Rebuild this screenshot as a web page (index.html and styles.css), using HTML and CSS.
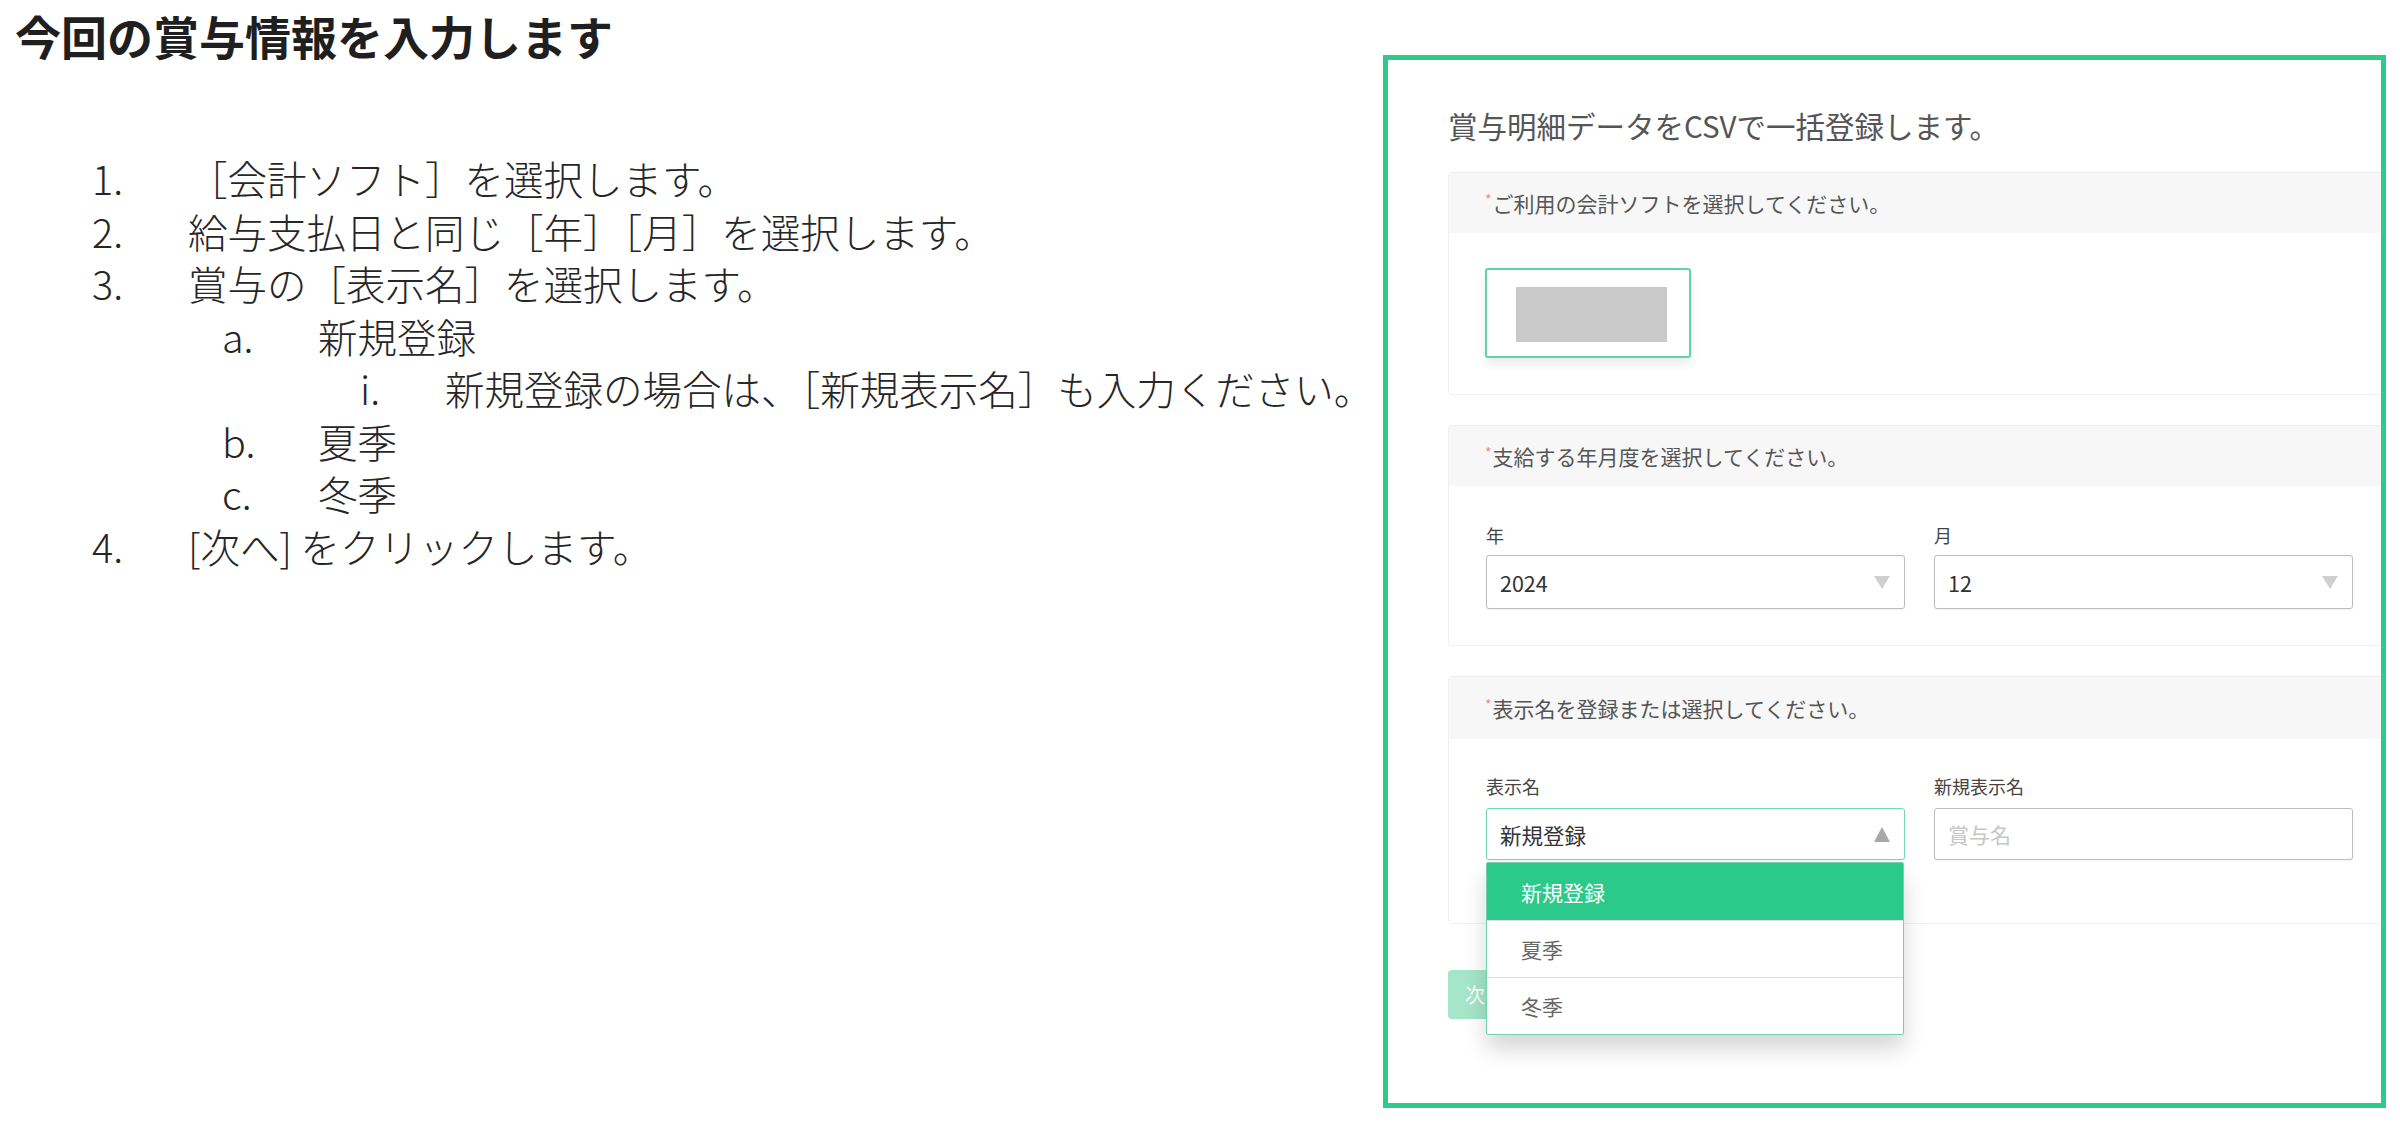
FILE: index.html
```html
<!DOCTYPE html>
<html lang="ja">
<head>
<meta charset="utf-8">
<title>賞与情報の入力</title>
<link rel="stylesheet" href="styles.css">
</head>
<body>
<div class="page">
  <section class="doc">
    <h1 class="title">今回の賞与情報を入力します</h1>
    <ol class="steps">
      <li class="step l1"><span class="n">1.</span><span class="t">［会計ソフト］を選択します。</span></li>
      <li class="step l1"><span class="n">2.</span><span class="t">給与支払日と同じ［年］［月］を選択します。</span></li>
      <li class="step l1"><span class="n">3.</span><span class="t">賞与の［表示名］を選択します。</span></li>
      <li class="step l2"><span class="n">a.</span><span class="t">新規登録</span></li>
      <li class="step l3"><span class="n">i.</span><span class="t">新規登録の場合は、［新規表示名］も入力ください。</span></li>
      <li class="step l2"><span class="n">b.</span><span class="t">夏季</span></li>
      <li class="step l2"><span class="n">c.</span><span class="t">冬季</span></li>
      <li class="step l1"><span class="n">4.</span><span class="t">[次へ] をクリックします。</span></li>
    </ol>
  </section>

  <section class="panel">
    <p class="panel-title">賞与明細データをCSVで一括登録します。</p>

    <div class="card">
      <div class="card-head"><span class="req">*</span>ご利用の会計ソフトを選択してください。</div>
      <div class="card-body soft-body">
        <div class="soft-btn"><span class="soft-logo"></span></div>
      </div>
    </div>

    <div class="card">
      <div class="card-head"><span class="req">*</span>支給する年月度を選択してください。</div>
      <div class="card-body fields ym">
        <div class="field">
          <div class="label">年</div>
          <div class="select tall"><span class="val">2024</span><span class="tri-down"></span></div>
        </div>
        <div class="field">
          <div class="label">月</div>
          <div class="select tall"><span class="val">12</span><span class="tri-down"></span></div>
        </div>
      </div>
    </div>

    <div class="card last">
      <div class="card-head head3"><span class="req">*</span>表示名を登録または選択してください。</div>
      <div class="card-body fields names">
        <div class="field">
          <div class="label">表示名</div>
          <div class="select-wrap">
            <div class="select open"><span class="val">新規登録</span><span class="tri-up"></span></div>
            <ul class="dropdown">
              <li class="opt active">新規登録</li>
              <li class="opt">夏季</li>
              <li class="opt">冬季</li>
            </ul>
          </div>
        </div>
        <div class="field">
          <div class="label">新規表示名</div>
          <div class="input"><span class="placeholder">賞与名</span></div>
        </div>
      </div>
    </div>

    <div class="next">次へ</div>
  </section>
</div>
</body>
</html>
```

FILE: styles.css
```css
* {
  box-sizing: border-box;
}

html, body {
  margin: 0;
  padding: 0;
  background: #ffffff;
}

body {
  font-family: "Noto Sans CJK JP", "Noto Sans", sans-serif;
  color: #262626;
}

.page {
  display: flex;
  width: 2400px;
  height: 1122px;
  overflow: hidden;
}

/* ---------- left document ---------- */
.doc {
  flex: none;
  width: 1383px;
}

.title {
  margin: 0;
  padding: 12px 0 0 15px;
  font-size: 46px;
  line-height: 46px;
  font-weight: 700;
  color: #1f1f1f;
}

.steps {
  list-style: none;
  margin: 94px 0 0;
  padding: 0;
}

.step {
  display: flex;
  font-size: 39.5px;
  line-height: 52.5px;
  font-weight: 300;
  color: #262626;
  white-space: nowrap;
}

.step .n {
  flex: none;
}

.l1 { padding-left: 92px; }
.l1 .n { width: 96px; }

.l2 { padding-left: 222px; }
.l2 .n { width: 96px; }

.l3 { padding-left: 360px; }
.l3 .n { width: 85px; }

/* ---------- right panel ---------- */
.panel {
  flex: none;
  position: relative;
  width: 1003px;
  height: 1053px;
  margin-top: 55px;
  border: 5px solid #2ccb8b;
  padding: 45px 0 0 60px;
  overflow: hidden;
  background: #ffffff;
}

.panel-title {
  margin: 0 0 27px;
  font-size: 29.5px;
  line-height: 40px;
  color: #555555;
  white-space: nowrap;
}

.card {
  border: 1px solid #f0f0f0;
  border-right: none;
  border-radius: 4px 0 0 4px;
  margin-bottom: 30px;
  background: #ffffff;
}

.card.last {
  margin-bottom: 0;
}

.card-head {
  height: 60px;
  display: flex;
  align-items: center;
  padding-left: 36px;
  background: #f7f7f7;
  font-size: 21px;
  color: #555555;
  white-space: nowrap;
}

.head3 {
  height: 62px;
}

.req {
  color: #ee8a8a;
  font-size: 14px;
  align-self: center;
  margin-top: -8px;
  margin-right: 1px;
}

.card-body {
  background: #ffffff;
}

.soft-body {
  height: 161px;
  padding: 35px 0 0 36px;
}

.soft-btn {
  width: 206px;
  height: 90px;
  border: 2px solid #5fd3a8;
  border-radius: 3px;
  background: #ffffff;
  display: flex;
  align-items: center;
  justify-content: center;
  box-shadow: 0 6px 10px rgba(0, 0, 0, 0.08);
}

.soft-logo {
  display: block;
  width: 151px;
  height: 55px;
  margin: 2px 0 0 6px;
  background: #c9c9c9;
}

.fields {
  display: grid;
  grid-template-columns: 419px 419px;
  column-gap: 29px;
  padding-left: 37px;
}

.ym {
  padding-top: 36px;
  padding-bottom: 36px;
}

.names {
  padding-top: 34px;
  padding-bottom: 63px;
}

.label {
  font-size: 18px;
  line-height: 26px;
  color: #444444;
  margin-bottom: 7px;
}

.names .label {
  margin-bottom: 9px;
}

.select,
.input {
  display: flex;
  align-items: center;
  justify-content: space-between;
  height: 52px;
  padding: 0 13px 0 13px;
  border: 1px solid #bdbdbd;
  border-radius: 3px;
  background: #ffffff;
  box-shadow: 0 1px 2px rgba(0, 0, 0, 0.06);
}

.select.tall {
  height: 54px;
}

.val {
  font-size: 21.5px;
  color: #333333;
}

.placeholder {
  font-size: 21px;
  color: #c6c6c6;
}

.tri-down {
  width: 0;
  height: 0;
  border-left: 8px solid transparent;
  border-right: 8px solid transparent;
  border-top: 13px solid #cfcfcf;
  margin-right: 1px;
}

.tri-up {
  width: 0;
  height: 0;
  border-left: 8.5px solid transparent;
  border-right: 8.5px solid transparent;
  border-bottom: 15px solid #a8a8a8;
  margin-right: 1px;
}

.select-wrap {
  position: relative;
}

.select.open {
  border-color: #72d8b3;
}

.dropdown {
  position: absolute;
  top: calc(100% + 2px);
  left: 0;
  width: 418px;
  margin: 0;
  padding: 0;
  list-style: none;
  border: 1px solid #6fd4ad;
  border-radius: 2px;
  background: #ffffff;
  box-shadow: 0 14px 22px rgba(0, 0, 0, 0.16);
  z-index: 5;
}

.opt {
  height: 57px;
  display: flex;
  align-items: center;
  padding-left: 34px;
  font-size: 21px;
  color: #666666;
  border-top: 1px solid #dedede;
}

.opt:first-child {
  border-top: none;
}

.opt.active {
  background: #2bca8b;
  color: #ffffff;
}

.next {
  width: 120px;
  height: 49px;
  margin-top: 46px;
  padding-left: 17px;
  display: flex;
  align-items: center;
  border-radius: 4px;
  background: #a5e5ca;
  color: #ffffff;
  font-size: 20px;
}
```
